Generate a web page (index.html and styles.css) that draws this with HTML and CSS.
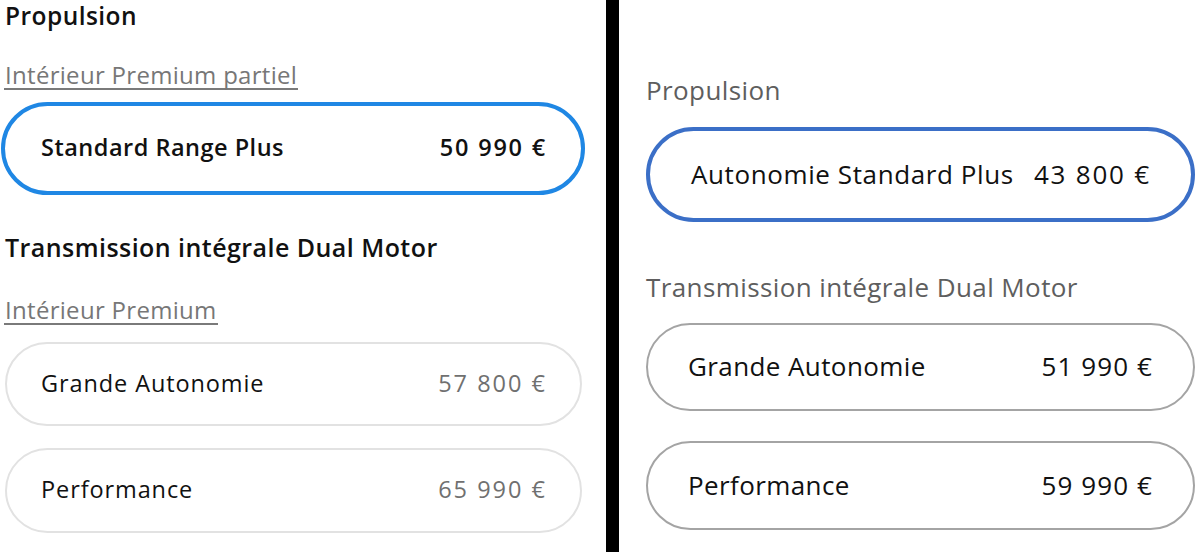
FILE: index.html
```html
<!DOCTYPE html>
<html lang="fr">
<head>
<meta charset="utf-8">
<title>Configurateur</title>
<link rel="stylesheet" href="styles.css">
</head>
<body>
<div class="page">
  <section class="panel panel-left">
    <h2 class="group-title t1">Propulsion</h2>
    <div class="sub"><a class="sub-link">Intérieur Premium partiel</a></div>
    <div class="option option-sel-left opt1">
      <span class="label">Standard Range Plus</span>
      <span class="price">50 990 €</span>
    </div>
    <h2 class="group-title t2">Transmission intégrale Dual Motor</h2>
    <div class="sub sub2"><a class="sub-link">Intérieur Premium</a></div>
    <div class="option option-left opt2">
      <span class="label">Grande Autonomie</span>
      <span class="price">57 800 €</span>
    </div>
    <div class="option option-left opt3">
      <span class="label">Performance</span>
      <span class="price">65 990 €</span>
    </div>
  </section>
  <div class="divider"></div>
  <section class="panel panel-right">
    <h2 class="r-title">Propulsion</h2>
    <div class="r-option r-sel r1">
      <span class="label">Autonomie Standard Plus</span>
      <span class="price">43 800 €</span>
    </div>
    <h2 class="r-title r-t2">Transmission intégrale Dual Motor</h2>
    <div class="r-option r2">
      <span class="label">Grande Autonomie</span>
      <span class="price">51 990 €</span>
    </div>
    <div class="r-option r3">
      <span class="label">Performance</span>
      <span class="price">59 990 €</span>
    </div>
  </section>
</div>
</body>
</html>
```

FILE: styles.css
```css
* { box-sizing: border-box; }
html, body {
  margin: 0;
  padding: 0;
  background: #ffffff;
  width: 1200px;
  height: 552px;
  overflow: hidden;
}
body {
  font-family: "Open Sans", "DejaVu Sans", sans-serif;
  color: #111111;
}
.page {
  display: flex;
  height: 552px;
}
.panel-left {
  width: 606px;
  display: flex;
  flex-direction: column;
  align-items: flex-start;
}
.divider {
  width: 13px;
  background: #000000;
}
.panel-right {
  flex: 1;
  display: flex;
  flex-direction: column;
  align-items: flex-start;
  padding: 76px 0 0 27px;
}

/* left */
.group-title {
  margin: 0 0 0 5px;
  font-size: 25px;
  line-height: 28px;
  font-weight: 600;
  letter-spacing: 0.45px;
  color: #111;
}
.t1 {
  font-size: 24.5px;
  line-height: 32px;
}
.t2 { margin-top: 38px; }
.sub {
  margin: 31px 0 0 4px;
}
.sub2 { margin-top: 37px; }
.sub-link {
  display: inline-block;
  font-size: 24px;
  line-height: 24px;
  padding: 0 1px 1px 1px;
  letter-spacing: 0.3px;
  color: #777777;
  border-bottom: 2px solid #7a7a7a;
}
.option {
  display: flex;
  align-items: center;
  justify-content: space-between;
  border-radius: 50px;
  font-size: 23.5px;
  letter-spacing: 0.5px;
  padding-bottom: 3px;
}
.option .price { letter-spacing: 1.8px; }
.option-sel-left {
  margin: 12px 0 0 1px;
  width: 584px;
  height: 93px;
  border: 4px solid #1f87e4;
  padding-left: 36px;
  padding-right: 34px;
  font-weight: 600;
}
.option-left {
  margin-left: 5px;
  width: 577px;
  border: 2px solid #e2e2e2;
  padding-left: 34px;
  padding-right: 33px;
}
.option-left .label { letter-spacing: 0.9px; }
.option-left .price { color: #707070; letter-spacing: 2px; }
.opt2 { margin-top: 17px; height: 84px; }
.opt3 { margin-top: 22px; height: 85px; }

/* right */
.r-title {
  margin: 0;
  font-size: 26px;
  line-height: 28px;
  font-weight: 500;
  letter-spacing: 0.4px;
  color: #5e5e5e;
}
.r-t2 { margin-top: 51px; }
.r-option {
  display: flex;
  align-items: center;
  justify-content: space-between;
  width: 549px;
  border-radius: 50px;
  border: 2px solid #a4a4a4;
  padding: 0 40px 2px 40px;
  font-size: 26px;
  letter-spacing: 0.4px;
  color: #111;
}
.r-option .price { letter-spacing: 1.1px; }
.r-sel {
  margin-top: 23px;
  height: 95px;
  border: 4px solid #3b6fc7;
  padding: 0 40px 2px 41px;
}
.r-sel .label { letter-spacing: 0.6px; }
.r-sel .price { letter-spacing: 1.8px; }
.r2 { margin-top: 22px; height: 88px; }
.r3 { margin-top: 30px; height: 89px; }
```
